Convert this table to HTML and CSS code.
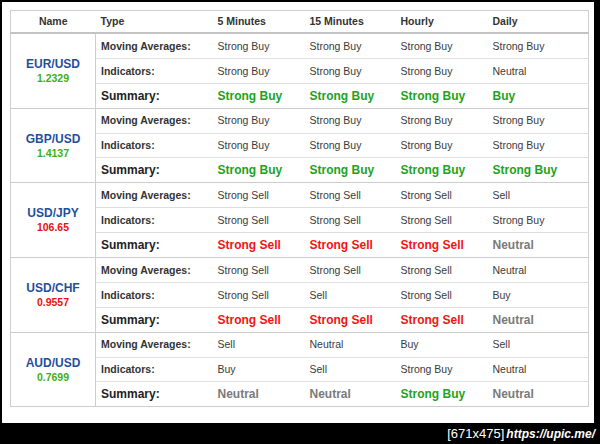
FILE: index.html
```html
<!DOCTYPE html>
<html>
<head>
<meta charset="utf-8">
<link rel="stylesheet" href="styles.css">
</head>
<body>
<div class="shot">
  <div class="sheet">
    <table class="tech">
      <colgroup>
        <col class="w-name"><col class="w-type"><col class="w-c1"><col class="w-c2"><col class="w-c3"><col class="w-c4">
      </colgroup>
      <thead>
        <tr><th class="h-name">Name</th><th>Type</th><th>5 Minutes</th><th>15 Minutes</th><th>Hourly</th><th>Daily</th></tr>
      </thead>
      <tbody>
        <tr><td rowspan="3" class="name"><div class="sym">EUR/USD</div><div class="px up">1.2329</div></td><td class="lbl">Moving Averages:</td><td>Strong Buy</td><td>Strong Buy</td><td>Strong Buy</td><td>Strong Buy</td></tr>
        <tr><td class="lbl">Indicators:</td><td>Strong Buy</td><td>Strong Buy</td><td>Strong Buy</td><td>Neutral</td></tr>
        <tr class="sum"><td class="lbl">Summary:</td><td class="buy">Strong Buy</td><td class="buy">Strong Buy</td><td class="buy">Strong Buy</td><td class="buy">Buy</td></tr>
      </tbody>
      <tbody>
        <tr><td rowspan="3" class="name"><div class="sym">GBP/USD</div><div class="px up">1.4137</div></td><td class="lbl">Moving Averages:</td><td>Strong Buy</td><td>Strong Buy</td><td>Strong Buy</td><td>Strong Buy</td></tr>
        <tr><td class="lbl">Indicators:</td><td>Strong Buy</td><td>Strong Buy</td><td>Strong Buy</td><td>Strong Buy</td></tr>
        <tr class="sum"><td class="lbl">Summary:</td><td class="buy">Strong Buy</td><td class="buy">Strong Buy</td><td class="buy">Strong Buy</td><td class="buy">Strong Buy</td></tr>
      </tbody>
      <tbody>
        <tr><td rowspan="3" class="name"><div class="sym">USD/JPY</div><div class="px down">106.65</div></td><td class="lbl">Moving Averages:</td><td>Strong Sell</td><td>Strong Sell</td><td>Strong Sell</td><td>Sell</td></tr>
        <tr><td class="lbl">Indicators:</td><td>Strong Sell</td><td>Strong Sell</td><td>Strong Sell</td><td>Strong Buy</td></tr>
        <tr class="sum"><td class="lbl">Summary:</td><td class="sell">Strong Sell</td><td class="sell">Strong Sell</td><td class="sell">Strong Sell</td><td class="neu">Neutral</td></tr>
      </tbody>
      <tbody>
        <tr><td rowspan="3" class="name"><div class="sym">USD/CHF</div><div class="px down">0.9557</div></td><td class="lbl">Moving Averages:</td><td>Strong Sell</td><td>Strong Sell</td><td>Strong Sell</td><td>Neutral</td></tr>
        <tr><td class="lbl">Indicators:</td><td>Strong Sell</td><td>Sell</td><td>Strong Sell</td><td>Buy</td></tr>
        <tr class="sum"><td class="lbl">Summary:</td><td class="sell">Strong Sell</td><td class="sell">Strong Sell</td><td class="sell">Strong Sell</td><td class="neu">Neutral</td></tr>
      </tbody>
      <tbody>
        <tr><td rowspan="3" class="name"><div class="sym">AUD/USD</div><div class="px up">0.7699</div></td><td class="lbl">Moving Averages:</td><td>Sell</td><td>Neutral</td><td>Buy</td><td>Sell</td></tr>
        <tr><td class="lbl">Indicators:</td><td>Buy</td><td>Sell</td><td>Strong Buy</td><td>Neutral</td></tr>
        <tr class="sum"><td class="lbl">Summary:</td><td class="neu">Neutral</td><td class="neu">Neutral</td><td class="buy">Strong Buy</td><td class="neu">Neutral</td></tr>
      </tbody>
    </table>
  </div>
  <div class="stamp"><span class="dims">[671x475]</span><span class="url">https://upic.me/</span></div>
</div>
</body>
</html>
```

FILE: styles.css
```css
html, body {
  margin: 0;
  padding: 0;
  background: #000;
}
.shot {
  width: 600px;
  height: 444px;
  padding: 2px 0 0 2px;
  box-sizing: border-box;
  overflow: hidden;
}
.sheet {
  width: 592px;
  height: 421px;
  background: #fff;
  padding: 8px;
  box-sizing: border-box;
}
.tech {
  border-collapse: collapse;
  table-layout: fixed;
  width: 578px;
  border: 1px solid #cfcfcf;
  font-family: "Liberation Sans", Arial, sans-serif;
  font-size: 10.5px;
  line-height: 1;
  color: #3a3a3a;
}
.w-name { width: 85px; }
.w-type { width: 117px; }
.w-c1 { width: 92px; }
.w-c2 { width: 91px; }
.w-c3 { width: 92px; }
.w-c4 { width: 101px; }

.tech th {
  height: 21px;
  padding: 0 5px;
  text-align: left;
  font-weight: bold;
  color: #333;
  border-bottom: 2px solid #c4c4c4;
}
.tech th.h-name { text-align: center; }

.tech td {
  padding: 0 5px;
  height: 23.9px;
  border-bottom: 1px solid #dedede;
  white-space: nowrap;
}
.tech tbody tr:last-child td { border-bottom: 1px solid #cdcdcd; }
.tech td.name {
  text-align: center;
  border-right: 1px solid #cdcdcd;
  border-bottom: 1px solid #cdcdcd;
}
.sym {
  font-size: 12px;
  font-weight: bold;
  color: #1f4f9e;
  margin-bottom: 3px;
}
.px {
  font-size: 10.5px;
  font-weight: bold;
}
.px.up { color: #3fae14; }
.px.down { color: #e81010; }

.tech td.lbl {
  font-weight: bold;
  color: #333;
}
.sum td { font-size: 12px; font-weight: bold; }
.sum td.lbl { color: #222; }
.tech td.buy { color: #1da21d; }
.tech td.sell { color: #f31414; }
.tech td.neu { color: #7a7a7a; }

.stamp {
  height: 21px;
  display: flex;
  justify-content: flex-end;
  align-items: center;
  gap: 2px;
  padding-right: 5px;
  color: #fff;
}
.dims { font-family: "Liberation Sans", sans-serif; font-size: 13px; }
.url { font-family: "Liberation Sans", sans-serif; font-style: italic; font-weight: bold; font-size: 12px; }
```
